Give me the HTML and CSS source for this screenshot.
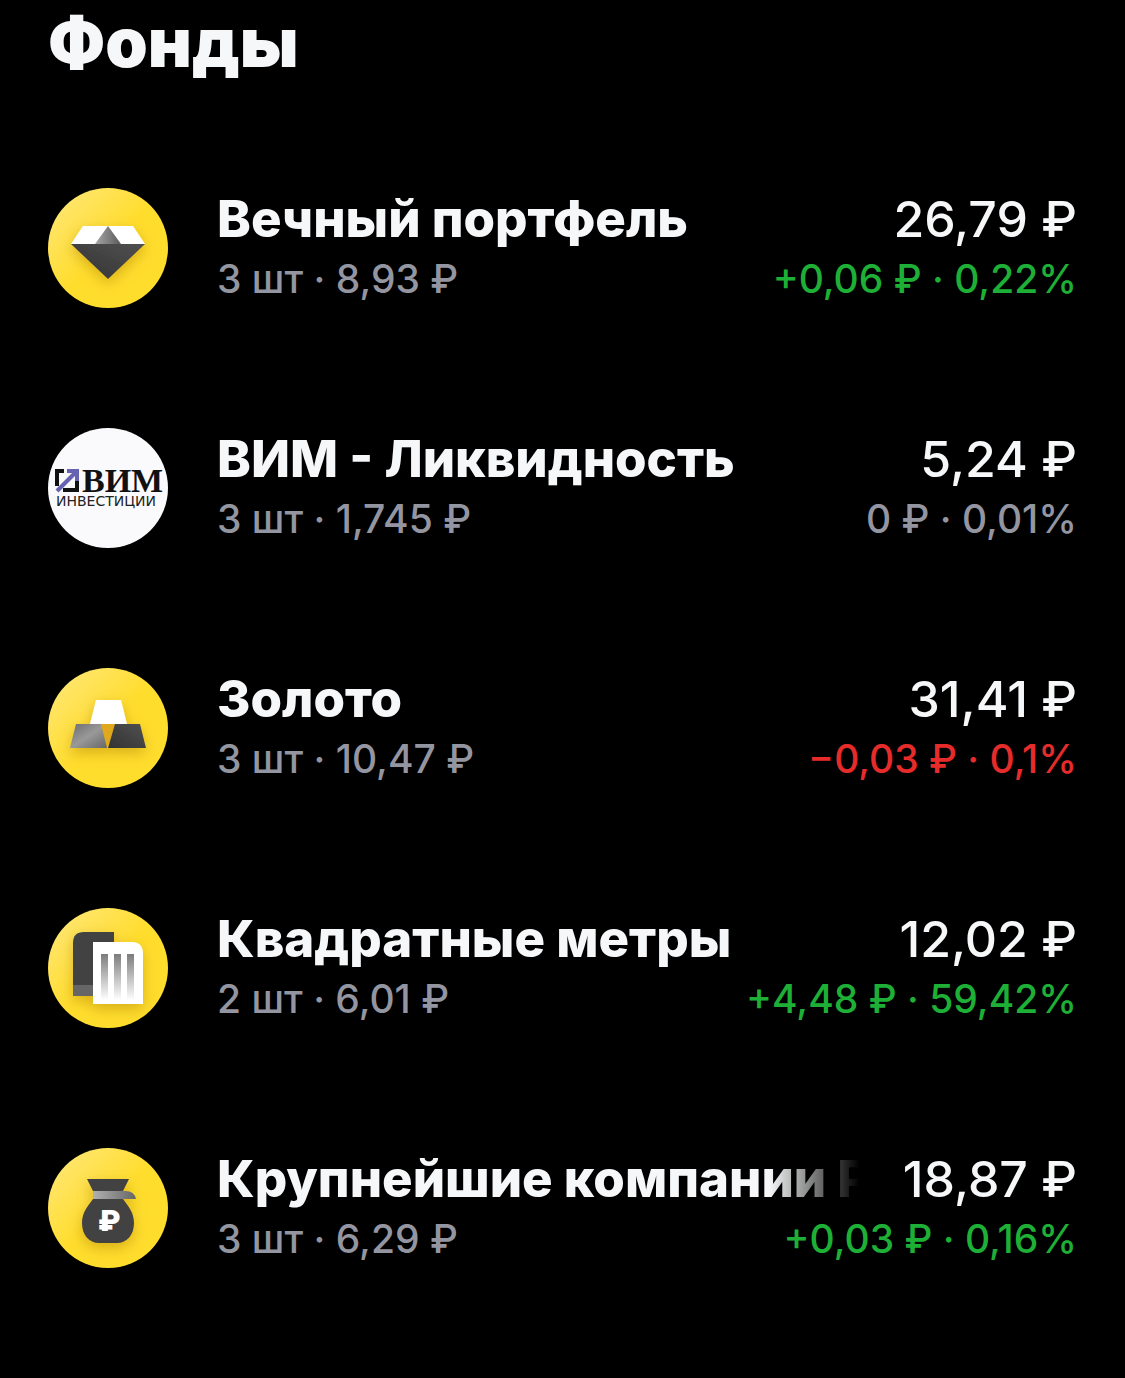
FILE: index.html
```html
<!DOCTYPE html>
<html lang="ru">
<head>
    <meta charset="UTF-8">
    <meta name="viewport" content="width=device-width, initial-scale=1.0">
    <title>Фонды</title>
    <link rel="stylesheet" href="styles.css">
</head>
<body>
    <!-- Shared gradients for the fund icons -->
    <svg class="defs" width="0" height="0" aria-hidden="true">
        <defs>
            <linearGradient id="yellow" x1="0" y1="0" x2="1" y2="1">
                <stop offset="0" stop-color="#ffe880"/>
                <stop offset="0.5" stop-color="#ffdd2d"/>
                <stop offset="1" stop-color="#ffdd2d"/>
            </linearGradient>
            <linearGradient id="dark" x1="0" y1="1" x2="1" y2="0">
                <stop offset="0" stop-color="#333"/>
                <stop offset="1" stop-color="#505050"/>
            </linearGradient>
            <linearGradient id="steel" x1="0" y1="0" x2="1" y2="0">
                <stop offset="0" stop-color="#a6a6a6"/>
                <stop offset="1" stop-color="#5a5a5a"/>
            </linearGradient>
            <linearGradient id="bar" x1="0" y1="0" x2="1" y2="1">
                <stop offset="0" stop-color="#6c6c6c"/>
                <stop offset="0.5" stop-color="#999"/>
                <stop offset="1" stop-color="#666"/>
            </linearGradient>
            <linearGradient id="strap" x1="0" y1="0" x2="1" y2="0">
                <stop offset="0" stop-color="#b0b0b0"/>
                <stop offset="1" stop-color="#666"/>
            </linearGradient>
            <linearGradient id="column" x1="0" y1="0" x2="0" y2="1">
                <stop offset="0" stop-color="#7c7c7c"/>
                <stop offset="1" stop-color="#fff"/>
            </linearGradient>
            <filter id="shadow" x="-40%" y="-40%" width="180%" height="190%">
                <feDropShadow dx="0" dy="5" stdDeviation="7" flood-color="#a87900" flood-opacity="0.45"/>
            </filter>
        </defs>
    </svg>

    <main>
        <h1>Фонды</h1>
        <ul class="funds">
            <li class="fund">
                <svg class="icon" viewBox="0 0 120 120" aria-hidden="true">
                    <circle cx="60" cy="60" r="60" fill="url(#yellow)"/>
                    <g filter="url(#shadow)">
                        <path d="M35 38H85L97 56H23Z" fill="#fff"/>
                        <path d="M60 38L73 56H47Z" fill="url(#steel)"/>
                        <path d="M23 56H97L60 91Z" fill="url(#dark)"/>
                    </g>
                </svg>
                <div class="info">
                    <div class="line">
                        <span class="name">Вечный портфель</span>
                        <span class="total">26,79 ₽</span>
                    </div>
                    <div class="line small">
                        <span>3 шт · 8,93 ₽</span>
                        <span class="up">+0,06 ₽ · 0,22%</span>
                    </div>
                </div>
            </li>
            <li class="fund">
                <svg class="icon" viewBox="0 0 120 120" aria-hidden="true">
                    <circle cx="60" cy="60" r="60" fill="#fafafc"/>
                    <path d="M16 43H9V58M15 62H29V53" fill="none" stroke="#111" stroke-width="4"/>
                    <path d="M9 63L27 45" fill="none" stroke="#6763b3" stroke-width="4"/>
                    <path d="M19 41H31V53H27V45H19Z" fill="#6763b3"/>
                    <text class="logo-name" x="34" y="64">ВИМ</text>
                    <text class="logo-sub" x="8" y="78">ИНВЕСТИЦИИ</text>
                </svg>
                <div class="info">
                    <div class="line">
                        <span class="name">ВИМ - Ликвидность</span>
                        <span class="total">5,24 ₽</span>
                    </div>
                    <div class="line small">
                        <span>3 шт · 1,745 ₽</span>
                        <span>0 ₽ · 0,01%</span>
                    </div>
                </div>
            </li>
            <li class="fund">
                <svg class="icon" viewBox="0 0 120 120" aria-hidden="true">
                    <circle cx="60" cy="60" r="60" fill="url(#yellow)"/>
                    <g filter="url(#shadow)">
                        <path d="M46 56H68L59 80Z" fill="#e0a91c"/>
                        <path d="M48 32H73L79 56H42Z" fill="#fff"/>
                        <path d="M28 56H53L59 80H22Z" fill="url(#bar)"/>
                        <path d="M67 56H92L98 80H60Z" fill="url(#dark)"/>
                    </g>
                </svg>
                <div class="info">
                    <div class="line">
                        <span class="name">Золото</span>
                        <span class="total">31,41 ₽</span>
                    </div>
                    <div class="line small">
                        <span>3 шт · 10,47 ₽</span>
                        <span class="down">−0,03 ₽ · 0,1%</span>
                    </div>
                </div>
            </li>
            <li class="fund">
                <svg class="icon" viewBox="0 0 120 120" aria-hidden="true">
                    <circle cx="60" cy="60" r="60" fill="url(#yellow)"/>
                    <g filter="url(#shadow)">
                        <path d="M36 24H66V88H25V35Q25 24 36 24Z" fill="#424242"/>
                        <path d="M25 77H45V88H25Z" fill="#666"/>
                        <path d="M45 34H84Q95 34 95 46V96H45Z" fill="#fff"/>
                    </g>
                    <path d="M53 46H60V92H53ZM66 46H73V92H66ZM79 46H86V92H79Z" fill="url(#column)"/>
                </svg>
                <div class="info">
                    <div class="line">
                        <span class="name">Квадратные метры</span>
                        <span class="total">12,02 ₽</span>
                    </div>
                    <div class="line small">
                        <span>2 шт · 6,01 ₽</span>
                        <span class="up">+4,48 ₽ · 59,42%</span>
                    </div>
                </div>
            </li>
            <li class="fund">
                <svg class="icon" viewBox="0 0 120 120" aria-hidden="true">
                    <circle cx="60" cy="60" r="60" fill="url(#yellow)"/>
                    <g filter="url(#shadow)">
                        <path d="M39 31H81L75 43V51C81 59 86 65 86 75C86 87 79 95 69 95H51C41 95 34 87 34 75C34 65 39 59 45 51V43Z" fill="#424242"/>
                        <path d="M45 43H78Q86 43 88 51H45Z" fill="url(#strap)"/>
                    </g>
                    <text class="bag-sign" x="61" y="83">₽</text>
                </svg>
                <div class="info">
                    <div class="line">
                        <span class="name fade">Крупнейшие компании РФ</span>
                        <span class="total">18,87 ₽</span>
                    </div>
                    <div class="line small">
                        <span>3 шт · 6,29 ₽</span>
                        <span class="up">+0,03 ₽ · 0,16%</span>
                    </div>
                </div>
            </li>
        </ul>
    </main>
</body>
</html>
```
FILE: styles.css
```css
body {
    margin: 0;
    background-color: #000;
    color: #f6f7f8;
    font-family: Inter, "Liberation Sans", sans-serif;
}
.defs {
    position: absolute;
}
main {
    padding: 0 48px;
}
h1 {
    margin: 0 0 44px;
    font-size: 68px;
    font-weight: 900;
    line-height: 84px;
}
.funds {
    margin: 0;
    padding: 0;
    list-style: none;
}
.fund {
    display: flex;
    gap: 49px;
    padding: 60px 0;
}
.icon {
    flex: none;
    width: 120px;
    height: 120px;
}
.info {
    flex: 1;
    min-width: 0;
}
.line {
    display: flex;
    justify-content: space-between;
    gap: 44px;
    font-size: 50px;
    line-height: 62px;
    white-space: nowrap;
}
.name {
    min-width: 0;
    overflow: hidden;
    font-size: 51px;
    font-weight: 800;
}
.fade {
    -webkit-mask-image: linear-gradient(to left, transparent, #000 90px);
    mask-image: linear-gradient(to left, transparent, #000 90px);
}
.total {
    font-weight: 500;
}
.small {
    color: #9395a0;
    font-size: 39px;
    font-weight: 500;
    line-height: 58px;
}
.up {
    color: #1eb036;
}
.down {
    color: #e62b2b;
}
.logo-name {
    fill: #111;
    font: bold 34px "Liberation Serif", serif;
}
.logo-sub {
    fill: #222;
    font: 14px "DejaVu Sans", sans-serif;
}
.bag-sign {
    fill: #fff;
    font: 900 29px Inter, sans-serif;
    text-anchor: middle;
}
```
